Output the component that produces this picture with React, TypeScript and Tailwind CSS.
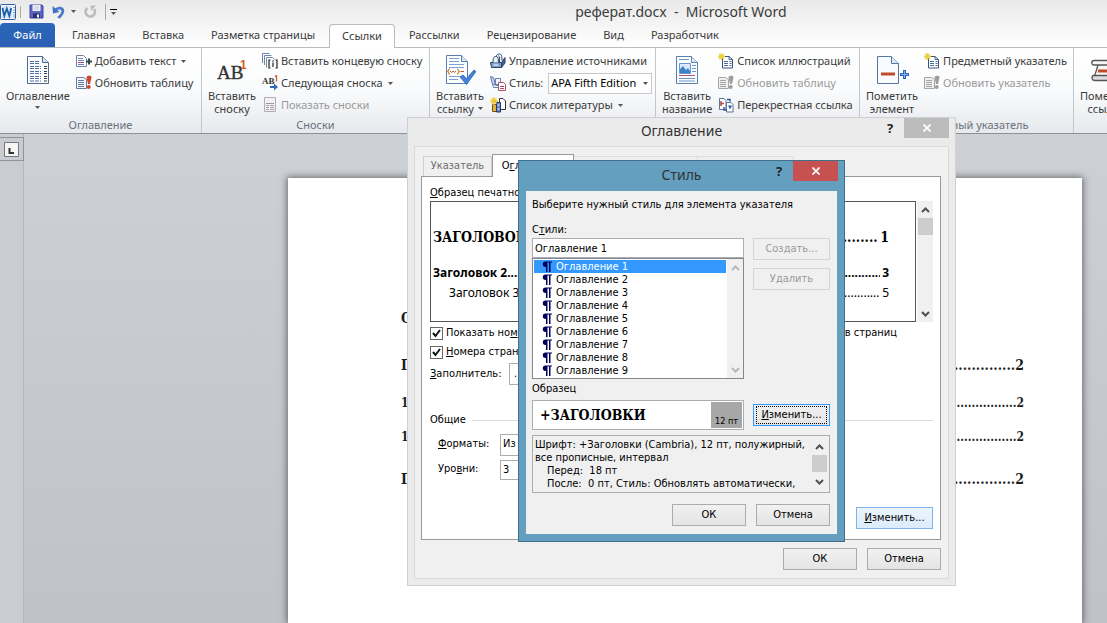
import { useState, type ReactNode } from "react";

const tabs = ["Главная", "Вставка", "Разметка страницы", "Ссылки", "Рассылки", "Рецензирование", "Вид", "Разработчик"];

const styles = [1, 2, 3, 4, 5, 6, 7, 8, 9].map((n) => `Оглавление ${n}`);

const uiFont = "font-['Noto_Sans','Open_Sans',sans-serif]";
const dialogFont = "font-['DejaVu_Sans_Condensed','DejaVu_Sans',sans-serif]";
const serifFont = "font-['DejaVu_Serif_Condensed','DejaVu_Serif',serif]";

/* ---------- icons ---------- */

function Caret({ className = "" }: { className?: string }) {
  return (
    <svg className={`h-[3px] w-[5px] shrink-0 ${className}`} viewBox="0 0 5 3" aria-hidden="true">
      <path d="M0 0h5L2.5 3z" fill="#555" />
    </svg>
  );
}

function Chevron({ up = false, color = "#505050" }: { up?: boolean; color?: string }) {
  return (
    <svg className="h-[6px] w-[9px]" viewBox="0 0 9 6" aria-hidden="true">
      <path d={up ? "M1 5 4.500 1.500 8 5" : "M1 1 4.500 4.500 8 1"} fill="none" stroke={color} strokeWidth="2" />
    </svg>
  );
}

function WordIcon() {
  return (
    <svg className="h-4 w-4" viewBox="0 0 16 16" aria-hidden="true">
      <rect x="0.500" y="0.500" width="15" height="15" rx="1" fill="#f4f8fd" stroke="#2f6099" />
      <rect x="1.500" y="2" width="10.500" height="12" fill="#d9e8f8" />
      <path d="M13 3.500h2M13 6h2M13 8.500h2M13 11h2M13 13h2" stroke="#7ba5d3" />
      <path d="m2.500 4 1.800 8 2.500-7.500L9.300 12l1.900-8" fill="none" stroke="#1f5fa5" strokeWidth="1.800" />
    </svg>
  );
}

function SaveIcon() {
  return (
    <svg className="h-[15px] w-[15px]" viewBox="0 0 15 15" aria-hidden="true">
      <path d="M1 1h12l1 1v12H1z" fill="#5a65c0" stroke="#3b469c" />
      <rect x="3.500" y="1" width="8" height="6" fill="#eef1fb" />
      <path d="M5 3h5M5 5h5" stroke="#b9c1e4" />
      <rect x="4" y="9.500" width="7" height="4.500" fill="#2b3170" />
      <rect x="8" y="10.500" width="2" height="3" fill="#fff" />
    </svg>
  );
}

function UndoIcon() {
  return (
    <svg className="h-[14px] w-[13px]" viewBox="0 0 13 14" aria-hidden="true">
      <path d="M3 5.500C6 2 11 2.500 10.800 6.500c-.2 3.500-3 4.500-4.300 6.500" fill="none" stroke="#4a7bcb" strokeWidth="2.800" />
      <path d="M0.500 1 1 8.500 7.500 7z" fill="#3f70c4" />
    </svg>
  );
}

function RedoIcon() {
  return (
    <svg className="h-[13px] w-[13px]" viewBox="0 0 13 13" aria-hidden="true">
      <path d="M3.500 3A4.700 4.700 0 1 0 10 4" fill="none" stroke="#bcbcbc" strokeWidth="2.600" />
      <path d="M6.500 0.500H12L7 6z" fill="#bcbcbc" />
    </svg>
  );
}

function TocIcon() {
  return (
    <svg className="h-[30px] w-6" viewBox="0 0 24 30" aria-hidden="true">
      <path d="M1.500 1.500h15l6 6v21h-21z" fill="#fbfdff" stroke="#51688a" />
      <path d="M16.500 1.500v6h6" fill="#d7e4f3" stroke="#51688a" />
      <path d="M4 6.500h9M4 8.500h9M4 11.500h11M4 13.500h11M4 16.500h11M4 18.500h11M4 21.500h11M4 23.500h11M4 26h11" stroke="#4a6fa3" strokeDasharray="4 1" />
      <path d="M18 11.500h3M18 13.500h3M18 16.500h3M18 18.500h3M18 21.500h3M18 23.500h3M18 26h3" stroke="#333e52" />
    </svg>
  );
}

function AddTextIcon() {
  return (
    <svg className="h-4 w-4" viewBox="0 0 16 16" aria-hidden="true">
      <path d="M0.500 2.500h7l3 3v8h-10z" fill="#fff" stroke="#6f81a3" />
      <path d="M2 5.500h5M2 7.500h6M2 11.500h6" stroke="#6a87b8" />
      <path d="M2 9.500h6" stroke="#a8476a" />
      <path d="M10 8.500h6M13 5.500v6" stroke="#2c4a48" strokeWidth="2" />
    </svg>
  );
}

function RefreshTableIcon({ muted = false }: { muted?: boolean }) {
  const edge = muted ? "#a5a5a5" : "#6479a0";
  return (
    <svg className="h-4 w-4" viewBox="0 0 16 16" aria-hidden="true">
      <path d="M0.500 2.500h7l3 2v9h-10z" fill={muted ? "#efefef" : "#f4f8ff"} stroke={edge} />
      <path d="M2 5.500h6M2 7.500h6M2 9.500h6M2 11.500h6" stroke={edge} />
      <path d="M10.500 2.500c0-2.500 5.500-2.500 5 0L14 9h-2z" fill={muted ? "#9d9d9d" : "#d0432c"} />
      <circle cx="12.800" cy="12" r="1.900" fill={muted ? "#9d9d9d" : "#d0432c"} />
    </svg>
  );
}

function FootnoteIcon() {
  return (
    <svg className="h-[30px] w-[30px]" viewBox="0 0 30 30" aria-hidden="true">
      <text x="0" y="24" fontFamily="Liberation Serif, serif" fontSize="19" fill="#333" stroke="#333" strokeWidth="0.400">
        AB
      </text>
      <text x="23" y="14" fontFamily="Liberation Sans, sans-serif" fontSize="12" fontWeight="700" fill="#cf5a2c">
        1
      </text>
    </svg>
  );
}

function EndnoteIcon() {
  return (
    <svg className="h-4 w-4" viewBox="0 0 16 16" aria-hidden="true">
      <path d="M0.500 10V0.500h7M2.500 12V2.500h7M4.500 14.500v-10h6l2 2" fill="none" stroke="#6f86a8" />
      <path d="M8.500 7H7v8h1.500M13.500 7H15v8h-1.500M11 9.500V14" fill="none" stroke="#222" strokeWidth="1.200" />
      <circle cx="11" cy="8" r="0.800" fill="#222" />
    </svg>
  );
}

function NextFootnoteIcon() {
  return (
    <svg className="h-4 w-4" viewBox="0 0 16 16" aria-hidden="true">
      <text x="0" y="9" fontFamily="Liberation Serif, serif" fontSize="9" fontWeight="700" fill="#333">
        AB
      </text>
      <path d="M13 1.500 14.500 0.500v6" fill="none" stroke="#cf5a2c" strokeWidth="1.300" />
      <path d="M8 11h4V8.500l4 3.500-4 3.500V13H8z" fill="#3567b8" />
    </svg>
  );
}

function ShowNotesIcon() {
  return (
    <svg className="h-4 w-3.5" viewBox="0 0 14 16" aria-hidden="true">
      <path d="M1.500 0.500h11v14h-11z" fill="#f3f0f3" stroke="#b3abb3" />
      <path d="M3 6.500h8" stroke="#999" />
      <path d="M3 8.500h3M7 8.500h4M3 10.500h3M7 10.500h4M3 12.500h3M7 12.500h4" stroke="#a79fa9" />
    </svg>
  );
}

function CitationIcon() {
  return (
    <svg className="h-[32px] w-[32px]" viewBox="0 0 32 32" aria-hidden="true">
      <path d="M2.500 1.500h15l6 6v22h-21z" fill="#fbfdff" stroke="#5a7fae" />
      <path d="M17.500 1.500v6h6" fill="#dbe8f6" stroke="#5a7fae" />
      <path d="M5 4.500h10M5 7.500h10M5 10.500h15M5 13.500h15M5 22.500h12M5 25.500h9" stroke="#7fa0cb" />
      <path d="M6 15c-2 0-1 2-2.500 2.500C5 18 4 20 6 20M13 15c2 0 1 2 2.500 2.500C14 18 15 20 13 20" fill="none" stroke="#d5862f" strokeWidth="1.200" />
      <path d="m6 17 1.500 1.500L9 17l1.500 1.500L12 17M17 17.500h3" fill="none" stroke="#b55e2d" />
      <path d="m16 23 3-2 3.500 3.500L30 16l2 1.500L22.500 30.500z" fill="#4583d6" stroke="#2d66b7" strokeWidth="0.800" />
    </svg>
  );
}

function SourcesIcon() {
  return (
    <svg className="h-4 w-4" viewBox="0 0 16 16" aria-hidden="true">
      <path d="M0.500 9.500h11v5h-10z" fill="#7d9cc8" stroke="#2c4468" />
      <path d="M11.500 9.500l3.500-5v5.500l-3.500 4.500z" fill="#40618f" stroke="#2c4468" />
      <path d="M3 9.500c0-5 1-6 3-6s2.500 2 2.500 6M6 3.500C7 1.500 8 1 9.500 1c2 0 2.500 2 2.500 6.500M9.500 9c0-3 .5-5.500-1-6" fill="#e9f1fa" stroke="#2c4468" />
      <path d="M3.500 12h5" stroke="#fff" />
    </svg>
  );
}

function StyleIcon() {
  return (
    <svg className="h-4 w-4" viewBox="0 0 16 16" aria-hidden="true">
      <path d="M0.500 1.500 3.500 2.500 5.500 10.500 2.500 9.500z" fill="#c3d3ea" stroke="#5f7ba8" />
      <path d="M5.500 3.500h5v7h-5zM2.500 9.500h6v3h-5z" fill="#f3f7fd" stroke="#6580aa" />
      <path d="M8.500 7.500h5l2 2v6h-7z" fill="#fff" stroke="#a95262" />
      <path d="M10 11.500h4M10 13.500h4" stroke="#a95262" />
    </svg>
  );
}

function BibliographyIcon() {
  return (
    <svg className="h-4 w-4" viewBox="0 0 16 16" aria-hidden="true">
      <path d="M9.500 1.500H13l2.500 2.500v8.500h-6z" fill="#fff" stroke="#333" />
      <path d="M2.500 7.500h4v7h-4z" fill="#e0b440" stroke="#71520f" />
      <path d="M6.500 5.500h4v9.500h-4z" fill="#6683c3" stroke="#273968" />
      <path d="M7.500 8h2M7.500 12h2" stroke="#fff" />
      <path d="M4 0v8M0 4h8M1.500 1.500l5 5M6.500 1.500l-5 5" stroke="#ecc93a" strokeWidth="1.300" />
    </svg>
  );
}

function CaptionIcon() {
  return (
    <svg className="h-[30px] w-6" viewBox="0 0 24 30" aria-hidden="true">
      <path d="M1.500 1.500h15l6 6v21h-21z" fill="#fbfdff" stroke="#5a7fae" />
      <path d="M16.500 1.500v6h6" fill="#dbe8f6" stroke="#5a7fae" />
      <path d="M4 4.500h10M4 23.500h16M4 26h16M17 10.500h4M17 13.500h4M17 16.500h4" stroke="#6b95cd" />
      <path d="M4.500 8.500h11v10h-11z" fill="#d9ebfc" stroke="#6b95cd" />
      <path d="M5 18v-4l3-3 3 4 2-2 2 3v2z" fill="#3f82cc" />
      <path d="M4 20.500h16" stroke="#b2566f" />
    </svg>
  );
}

function NewTableIcon() {
  return (
    <svg className="h-4 w-4" viewBox="0 0 16 16" aria-hidden="true">
      <path d="M4.500 3.500H11l3.500 3v8.500h-10z" fill="#fff" stroke="#3d5478" />
      <path d="M11 3.500v3h3.500M6 8.500h4M6 10.500h4M6 12.500h4M11.500 8.500h2M11.500 10.500h2M11.500 12.500h2" fill="none" stroke="#4b6b9c" />
      <path d="M3.500 0v7M0 3.500h7M1 1l5 5M6 1 1 6" stroke="#ead044" strokeWidth="1.300" />
    </svg>
  );
}

function CrossRefIcon() {
  return (
    <svg className="h-4 w-4" viewBox="0 0 16 16" aria-hidden="true">
      <path d="M1.500 1.500H6l2 2v9H1.500zM8.500 5.500H13l2 2v7.500H8.500z" fill="#fff" stroke="#5e7291" />
      <path d="M3 4v5M3 6.500h3" stroke="#b04c4c" strokeWidth="1.600" />
      <path d="M9 2.500h3v2M6 10v3h3" fill="none" stroke="#2d5aa8" strokeWidth="1.500" />
      <path d="M10 8.500h4l-2 4z" fill="#2d5aa8" />
    </svg>
  );
}

function MarkEntryIcon() {
  return (
    <svg className="h-[30px] w-[34px]" viewBox="0 0 34 30" aria-hidden="true">
      <path d="M2.500 1.500h14l7 7v20h-21z" fill="#f8fbff" stroke="#55769f" />
      <path d="M16.500 1.500v7h7" fill="#dbe8f6" stroke="#55769f" />
      <path d="M6 19h14" stroke="#c04a2b" strokeWidth="3" />
      <path d="M25 19.500h9M29.500 15v9" stroke="#2f66b4" strokeWidth="3" />
      <path d="M26 19.500h7M29.500 16v7" stroke="#7db2ec" />
    </svg>
  );
}

function MarkCitationIcon() {
  return (
    <svg className="h-[30px] w-8" viewBox="0 0 32 30" aria-hidden="true">
      <path d="M4 5.500h24c4 0 4 4.500 0 4.500H4c-3 0-3-4.500 0-4.500zM8 10h19l-4 13H4z" fill="#f7f7f7" stroke="#555" strokeWidth="1.300" />
      <path d="M3 20.500h20c3 0 3 5 0 5H5c-3 0-4-3-2-5z" fill="#dcdcdc" stroke="#555" strokeWidth="1.300" />
      <path d="M8 16h14" stroke="#c04a2b" strokeWidth="3" />
    </svg>
  );
}

/* ---------- ribbon ---------- */

function BigButton({ icon, lines, caret }: { icon: ReactNode; lines: string[]; caret?: "inline" | "below" }) {
  return (
    <button type="button" className="flex shrink-0 flex-col items-center leading-[13px]">
      <span className="flex h-[39px] items-center">{icon}</span>
      {lines.map((line, i) => (
        <span key={line} className="flex items-center gap-1 whitespace-nowrap">
          {line}
          {caret === "inline" && i === lines.length - 1 && <Caret />}
        </span>
      ))}
      {caret === "below" && <Caret className="mt-1" />}
    </button>
  );
}

function SmallButton({
  icon,
  children,
  caret = false,
  disabled = false,
}: {
  icon: ReactNode;
  children: ReactNode;
  caret?: boolean;
  disabled?: boolean;
}) {
  return (
    <button
      type="button"
      disabled={disabled}
      className="flex h-[22px] items-center gap-[3px] whitespace-nowrap disabled:text-[#9a9a9a]"
    >
      <span className="flex w-4 justify-center">{icon}</span>
      {children}
      {caret && <Caret className="ml-0.5" />}
    </button>
  );
}

function Group({ label, width, children }: { label: string; width: string; children: ReactNode }) {
  return (
    <section className={`flex shrink-0 flex-col border-r border-[#c3c7cc] ${width}`}>
      <div className="flex h-[68px] shrink-0 gap-1.5 pt-0.5 pl-1.5">{children}</div>
      <h2 className="text-center leading-[18px] text-[#6a727c]">{label}</h2>
    </section>
  );
}

function Ribbon() {
  return (
    <div className="flex h-[87px] overflow-hidden border-t border-b border-t-[#b8bbbf] border-b-[#8c9197] bg-linear-to-b from-white via-[#fafbfc] to-[#e6e9ed]">
      <Group label="Оглавление" width="w-[202px]">
        <BigButton icon={<TocIcon />} lines={["Оглавление"]} caret="below" />
        <div>
          <SmallButton icon={<AddTextIcon />} caret>Добавить текст</SmallButton>
          <SmallButton icon={<RefreshTableIcon />}>Обновить таблицу</SmallButton>
        </div>
      </Group>
      <Group label="Сноски" width="w-[228px]">
        <BigButton icon={<FootnoteIcon />} lines={["Вставить", "сноску"]} />
        <div>
          <SmallButton icon={<EndnoteIcon />}>Вставить концевую сноску</SmallButton>
          <SmallButton icon={<NextFootnoteIcon />} caret>Следующая сноска</SmallButton>
          <SmallButton icon={<ShowNotesIcon />} disabled>Показать сноски</SmallButton>
        </div>
      </Group>
      <Group label="Ссылки и списки литературы" width="w-[226px]">
        <BigButton icon={<CitationIcon />} lines={["Вставить", "ссылку"]} caret="inline" />
        <div>
          <SmallButton icon={<SourcesIcon />}>Управление источниками</SmallButton>
          <div className="flex h-[22px] items-center gap-[3px]">
            <StyleIcon />
            <label htmlFor="citation-style">Стиль:</label>
            <span className="relative ml-0.5 flex items-center">
              <select
                id="citation-style"
                className="h-[21px] w-[104px] appearance-none border border-[#c5c8cc] bg-white px-0.5 text-[11px] text-black"
              >
                <option>APA Fifth Edition</option>
              </select>
              <Caret className="pointer-events-none absolute right-1" />
            </span>
          </div>
          <SmallButton icon={<BibliographyIcon />} caret>Список литературы</SmallButton>
        </div>
      </Group>
      <Group label="Названия" width="w-[204px]">
        <BigButton icon={<CaptionIcon />} lines={["Вставить", "название"]} />
        <div>
          <SmallButton icon={<NewTableIcon />}>Список иллюстраций</SmallButton>
          <SmallButton icon={<RefreshTableIcon muted />} disabled>Обновить таблицу</SmallButton>
          <SmallButton icon={<CrossRefIcon />}>Перекрестная ссылка</SmallButton>
        </div>
      </Group>
      <Group label="Предметный указатель" width="w-[214px]">
        <BigButton icon={<MarkEntryIcon />} lines={["Пометить", "элемент"]} />
        <div>
          <SmallButton icon={<NewTableIcon />}>Предметный указатель</SmallButton>
          <SmallButton icon={<RefreshTableIcon muted />} disabled>Обновить указатель</SmallButton>
        </div>
      </Group>
      <Group label="" width="w-[120px]">
        <BigButton icon={<MarkCitationIcon />} lines={["Пометить", "ссылку"]} />
      </Group>
    </div>
  );
}

function WordHeader() {
  return (
    <header className={`text-[11px] text-[#3b3b3b] ${uiFont}`}>
      <div className="bg-linear-to-b from-[#e9e9e9] to-white">
        <div className="flex h-[23px] items-center">
          <div className="flex w-[120px] shrink-0 items-center">
            <WordIcon />
            <span className="mx-1 h-3 w-px bg-[#a9b48a]" />
            <button type="button" aria-label="Сохранить" className="ml-1"><SaveIcon /></button>
            <button type="button" aria-label="Отменить" className="ml-2 flex items-center gap-1.5">
              <UndoIcon />
              <Caret />
            </button>
            <button type="button" aria-label="Повторить" className="ml-2"><RedoIcon /></button>
            <span className="ml-2 h-4 w-px bg-[#aaa]" />
            <button type="button" aria-label="Настройка панели" className="ml-1 flex flex-col items-center gap-0.5">
              <span className="h-px w-[7px] bg-black" />
              <Caret />
            </button>
          </div>
          <h1 className="grow pl-[135px] text-center text-[14px] whitespace-pre">
            реферат.docx  -  Microsoft Word
          </h1>
        </div>
        <nav className="flex h-6 items-end gap-px">
          <button
            type="button"
            className="mr-[3px] h-6 w-[55px] shrink-0 rounded-t-sm bg-linear-to-b from-[#2b66b8] to-[#2a5fb4] text-white"
          >
            Файл
          </button>
          {tabs.map((tab) => (
            <button
              key={tab}
              type="button"
              className={`shrink-0 whitespace-nowrap ${
                tab === "Ссылки"
                  ? "relative -mb-px h-6 rounded-t border border-b-0 border-[#b8bbbf] bg-white px-3"
                  : "h-[23px] px-[13px]"
              }`}
            >
              {tab}
            </button>
          ))}
        </nav>
      </div>
      <Ribbon />
    </header>
  );
}

/* ---------- document ---------- */

function DocumentArea() {
  const rows = [
    { title: "ГЛАВА 1", size: "text-[14px]", gap: "mt-7" },
    { title: "1.1.", size: "text-[12px]", gap: "mt-5" },
    { title: "1.2.", size: "text-[12px]", gap: "mt-4" },
    { title: "ГЛАВА 2", size: "text-[14px]", gap: "mt-6" },
  ];
  return (
    <main className="flex grow overflow-hidden bg-linear-to-b from-[#cdd0d5] to-[#bfc3c8]">
      <div className="w-6 shrink-0 border-r border-[#b4b8bd] bg-[#c9ccd1]">
        <button type="button" aria-label="Табуляция" className="mt-[3px] flex h-6 w-6 items-center justify-center border border-l-0 border-[#8f9499]">
          <svg className="h-[15px] w-[15px]" viewBox="0 0 15 15" aria-hidden="true">
            <path d="M0.500 0.500h14v14H.5z" fill="#f5f5f5" stroke="#777" />
            <path d="M5.500 6v5H10" fill="none" stroke="#333" strokeWidth="2" />
          </svg>
        </button>
      </div>
      <article
        className={`mt-11 mr-[25px] ml-[264px] grow bg-white pt-[130px] pr-[58px] pl-[113px] font-bold text-[#1c1c1c] shadow-[0_0_7px_1px_rgba(0,0,0,0.5)] ${serifFont}`}
      >
        <h2 className="text-[14px] leading-5">ОГЛАВЛЕНИЕ</h2>
        {rows.map((row) => (
          <p key={row.title} className={`flex leading-[18px] ${row.size} ${row.gap}`}>
            <span>{row.title}</span>
            <span className="w-0 grow overflow-hidden whitespace-nowrap" dir="rtl">{".".repeat(180)}</span>
            <span>2</span>
          </p>
        ))}
      </article>
    </main>
  );
}

/* ---------- dialogs ---------- */

function PushButton({ children, look = "normal", disabled = false }: { children: ReactNode; look?: "normal" | "hot" | "focus"; disabled?: boolean }) {
  const looks = {
    normal: "w-[74px] border-[#acacac] bg-linear-to-b from-[#f1f1f1] to-[#e4e4e4]",
    hot: "w-[77px] border-[#7eb4ea] bg-linear-to-b from-[#ecf4fc] to-[#dcecfc]",
    focus: "w-[77px] border-[#3399ff] bg-linear-to-b from-[#f1f1f1] to-[#e4e4e4]",
  };
  return (
    <button
      type="button"
      disabled={disabled}
      className={`h-[22px] shrink-0 border ${disabled ? "w-[77px] border-[#d4d4d4] bg-[#f0f0f0] text-[#9a9a9a]" : looks[look]}`}
    >
      {look === "focus" ? (
        <span className="mx-0.5 block border border-dotted border-black leading-4">{children}</span>
      ) : (
        children
      )}
    </button>
  );
}

function CloseMark() {
  return (
    <svg className="h-2 w-2" viewBox="0 0 8 8" aria-hidden="true">
      <path d="m0.500 0.500 7 7M7.500 0.500l-7 7" stroke="#fff" strokeWidth="1.700" />
    </svg>
  );
}

function TitleBar({ title, height, close }: { title: string; height: string; close: string }) {
  return (
    <div className={`relative flex items-center justify-center ${height} ${uiFont}`}>
      <h2 className="pb-[3px] text-[14px] text-[#333]">{title}</h2>
      <div className="absolute top-0 right-1.5 flex items-center">
        <button type="button" aria-label="Справка" className="w-7 text-[13px] leading-5 font-bold text-[#222]">?</button>
        <button type="button" aria-label="Закрыть" className={`flex h-5 w-[45px] items-center justify-center ${close}`}>
          <CloseMark />
        </button>
      </div>
    </div>
  );
}

function ScrollBar({ thumb = true, muted = false }: { thumb?: boolean; muted?: boolean }) {
  const color = muted ? "#b8b8b8" : "#505050";
  return (
    <div className="flex w-4 shrink-0 flex-col items-center bg-[#f0f0f0]">
      <span className="flex h-[17px] items-center"><Chevron up color={color} /></span>
      {thumb && <span className="h-[17px] w-[15px] bg-[#cdcdcd]" />}
      <span className="grow" />
      <span className="flex h-[17px] items-center"><Chevron color={color} /></span>
    </div>
  );
}

function CheckBox({ children }: { children: ReactNode }) {
  const [checked, setChecked] = useState(true);
  return (
    <label className="flex items-center gap-[3px] whitespace-nowrap">
      <span className="relative flex">
        <input
          type="checkbox"
          checked={checked}
          onChange={() => setChecked(!checked)}
          className="h-[13px] w-[13px] appearance-none border border-[#666] bg-white"
        />
        {checked && (
          <svg className="pointer-events-none absolute inset-0 h-[13px] w-[13px]" viewBox="0 0 13 13" aria-hidden="true">
            <path d="m3 6 2.500 3L10 3" fill="none" stroke="#111" strokeWidth="2" />
          </svg>
        )}
      </span>
      <span>{children}</span>
    </label>
  );
}

function PreviewLine({ title, page, className }: { title: string; page: string; className: string }) {
  return (
    <p className={`flex ${className}`}>
      <span>{title}</span>
      <span className="w-0 grow overflow-hidden whitespace-nowrap">{".".repeat(180)}</span>
      <span className="pl-0.5">{page}</span>
    </p>
  );
}

function TocDialog() {
  return (
    <div
      role="dialog"
      aria-label="Оглавление"
      className={`absolute top-[117px] left-[407px] w-[549px] border border-[#d0d0d0] bg-[#ebebeb] text-[11px] text-black ${dialogFont}`}
    >
      <TitleBar title="Оглавление" height="h-7" close="bg-[#bcbcbc]" />
      <div className="mx-1.5 mb-1.5 border border-[#dadada] bg-[#f0f0f0] pt-[7px] pr-[7px] pb-2 pl-1.5">
        <div className="flex items-end pl-0.5">
          <button type="button" className="h-5 w-[69px] border border-b-0 border-[#d0d0d0] text-[#6d6d6d]">Указатель</button>
          <button type="button" className="relative -mb-px h-[23px] w-[82px] border border-b-0 border-[#999] bg-white">
            О<u>г</u>лавление
          </button>
          <span className="h-5 w-[124px] border-t border-r border-[#dcdcdc]" />
          <span className="h-5 w-[96px] border-t border-r border-[#dcdcdc]" />
        </div>
        <div className="flex h-[364px] flex-col border border-[#999] bg-white pt-2 pr-[7px] pl-2">
          <p className="leading-4"><u>О</u>бразец печатного документа</p>
          <div className="flex h-[121px]">
            <div className="mr-px grow border border-[#555] pt-[25px] pr-[26px] pl-0.5">
              <PreviewLine title="ЗАГОЛОВОК 1" page="1" className={`text-[14px] leading-5 font-bold ${serifFont}`} />
              <PreviewLine title="Заголовок 2" page="3" className={`mt-4 text-[12px] leading-5 font-bold ${uiFont}`} />
              <PreviewLine title="Заголовок 3" page="5" className={`pl-4 text-[12px] leading-5 ${uiFont}`} />
            </div>
            <ScrollBar />
          </div>
          <div className="mt-[3px] flex h-4 items-center justify-between pr-9">
            <CheckBox>Показать но<u>м</u>ера страниц</CheckBox>
            <CheckBox>Гиперссылки вместо номеров страниц</CheckBox>
          </div>
          <div className="mt-px flex h-5 items-center">
            <CheckBox><u>Н</u>омера страниц по правому краю</CheckBox>
          </div>
          <div className="mt-px flex items-center">
            <label htmlFor="leader" className="w-[79px]"><u>З</u>аполнитель:</label>
            <select id="leader" className="h-[22px] w-[90px] appearance-none border border-[#abadb3] px-1">
              <option>.......</option>
            </select>
          </div>
          <div className="mt-[27px] flex items-center gap-1.5">
            <h3>Общие</h3>
            <span className="h-px grow bg-[#dcdcdc]" />
          </div>
          <div className="mt-[5px] flex items-center pl-2">
            <label htmlFor="formats" className="w-[62px]"><u>Ф</u>орматы:</label>
            <select id="formats" className="h-[22px] w-[120px] appearance-none border border-[#abadb3] px-0.5">
              <option>Из шаблона</option>
            </select>
          </div>
          <div className="mt-1 flex items-center pl-2">
            <label htmlFor="levels" className="w-[62px]">Уро<u>в</u>ни:</label>
            <input id="levels" defaultValue="3" className="h-5 w-[44px] border border-[#abadb3] px-0.5" />
          </div>
          <div className="mt-auto mb-2.5 flex justify-end">
            <PushButton look="hot"><u>И</u>зменить...</PushButton>
          </div>
        </div>
        <div className="mt-2 flex justify-end gap-2.5">
          <PushButton>ОК</PushButton>
          <PushButton>Отмена</PushButton>
        </div>
      </div>
    </div>
  );
}

function StyleDialog() {
  const [selected, setSelected] = useState(styles[0]);
  return (
    <div
      role="dialog"
      aria-label="Стиль"
      className={`absolute top-[160px] left-[518px] w-[327px] border border-[#41708c] bg-[#659fbf] text-[11px] text-black ${dialogFont}`}
    >
      <TitleBar title="Стиль" height="h-[30px]" close="bg-[#c75050]" />
      <div className="mx-[7px] mb-[7px] flex flex-col bg-[#f0f0f0] pt-1.5 pr-[7px] pb-2 pl-1.5">
        <p className="leading-4 whitespace-nowrap">Выберите нужный стиль для элемента указателя</p>
        <label htmlFor="style-name" className="mt-[9px] leading-4">С<u>т</u>или:</label>
        <div className="flex gap-[9px]">
          <div className="flex grow flex-col">
            <input
              id="style-name"
              value={selected}
              onChange={(e) => setSelected(e.target.value)}
              className="h-5 w-full border border-[#abadb3] bg-white px-0.5"
            />
            <div className="flex border border-[#828790] bg-white">
              <ul role="listbox" aria-label="Стили" className="grow p-px">
                {styles.map((name) => (
                  <li
                    key={name}
                    role="option"
                    aria-selected={name === selected}
                    onClick={() => setSelected(name)}
                    className="flex h-[13px] items-center gap-1 pl-2 leading-[15px] aria-selected:bg-[#3399ff] aria-selected:text-white"
                  >
                    <svg className="h-[11px] w-[10px]" viewBox="0 0 10 11" aria-hidden="true">
                      <path d="M5 0.500H3.500a2.700 2.700 0 0 0 0 5.400H4V11h1.500V1.500H7V11h1.500V1.500H10v-1z" fill="#00005a" />
                    </svg>
                    {name}
                  </li>
                ))}
              </ul>
              <ScrollBar thumb={false} muted />
            </div>
          </div>
          <div className="flex flex-col gap-2">
            <PushButton disabled>Создать...</PushButton>
            <PushButton disabled>Удалить</PushButton>
          </div>
        </div>
        <h3 className="mt-0.5 leading-4">Образец</h3>
        <div className="mt-[3px] flex items-center gap-[9px]">
          <div className="flex h-[30px] grow border border-[#abadb3] bg-white p-px">
            <span className={`grow pl-1.5 text-[14px] leading-[26px] font-bold ${serifFont}`}>+ЗАГОЛОВКИ</span>
            <span className="flex w-[31px] items-end justify-center bg-[#a7a7a7] text-[9px]">12 пт</span>
          </div>
          <PushButton look="focus"><u>И</u>зменить...</PushButton>
        </div>
        <div className="mt-[5px] flex h-[58px] border border-[#abadb3] p-0.5">
          <div className="grow overflow-hidden leading-[13px] whitespace-pre">
            <p>Шрифт: +Заголовки (Cambria), 12 пт, полужирный,</p>
            <p>все прописные, интервал</p>
            <p className="pl-3">Перед:  18 пт</p>
            <p className="pl-3">После:  0 пт, Стиль: Обновлять автоматически,</p>
          </div>
          <ScrollBar />
        </div>
        <div className="mt-[11px] flex justify-end gap-2.5">
          <PushButton>ОК</PushButton>
          <PushButton>Отмена</PushButton>
        </div>
      </div>
    </div>
  );
}

export default function App() {
  return (
    <div className="relative flex min-h-screen flex-col overflow-hidden">
      <WordHeader />
      <DocumentArea />
      <TocDialog />
      <StyleDialog />
    </div>
  );
}
